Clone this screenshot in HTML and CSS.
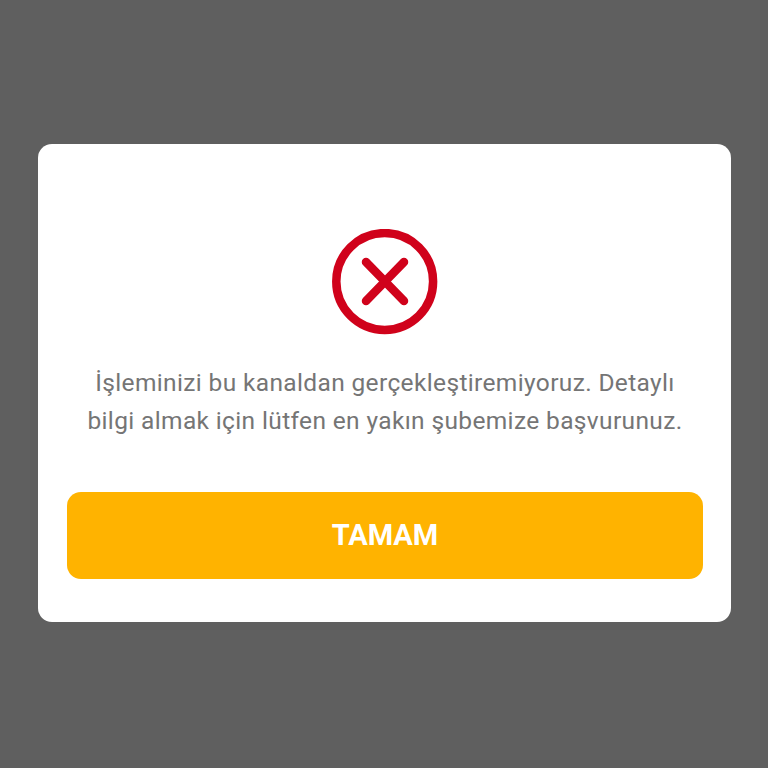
FILE: index.html
```html
<!DOCTYPE html>
<html lang="tr">
<head>
<meta charset="utf-8">
<title>Hata</title>
<link rel="stylesheet" href="styles.css">
</head>
<body>
<main class="overlay">
  <section class="dialog">
    <svg class="icon" viewBox="0 0 106 106" width="106" height="106" aria-hidden="true">
      <circle class="ring" cx="52.7" cy="52.5" r="48.4"/>
      <path class="cross" d="M34 33 L72 72 M72 33 L34 72"/>
    </svg>
    <p class="message">İşleminizi bu kanaldan gerçekleştiremiyoruz. Detaylı<br>bilgi almak için lütfen en yakın şubemize başvurunuz.</p>
    <button class="action" type="button">TAMAM</button>
  </section>
</main>
</body>
</html>
```
FILE: styles.css
```css
html, body {
  margin: 0;
  height: 100%;
}
.overlay {
  height: 768px;
  box-sizing: border-box;
  background: #5f5f5f;
  padding: 144px 37px 0 38px;
  font-family: Roboto, "Noto Sans", sans-serif;
}
.dialog {
  height: 478px;
  box-sizing: border-box;
  background: #fff;
  border-radius: 14px;
  padding: 85px 28px 0 29px;
  display: flex;
  flex-direction: column;
  align-items: center;
}
.icon {
  display: block;
  flex: none;
}
.ring {
  fill: none;
  stroke: #d0021b;
  stroke-width: 8.5;
}
.cross {
  fill: none;
  stroke: #d0021b;
  stroke-width: 8.5;
  stroke-linecap: round;
}
.message {
  margin: 29px 0 0;
  font-size: 24.5px;
  line-height: 38px;
  color: #757575;
  text-align: center;
  letter-spacing: 0.36px;
  white-space: nowrap;
}
.action {
  margin-top: 52px;
  width: 100%;
  height: 87px;
  flex: none;
  border: 0;
  border-radius: 14px;
  padding: 0 0 2px;
  background: #ffb300;
  color: #fff;
  font: 700 29px Roboto, "Noto Sans", sans-serif;
}
```
